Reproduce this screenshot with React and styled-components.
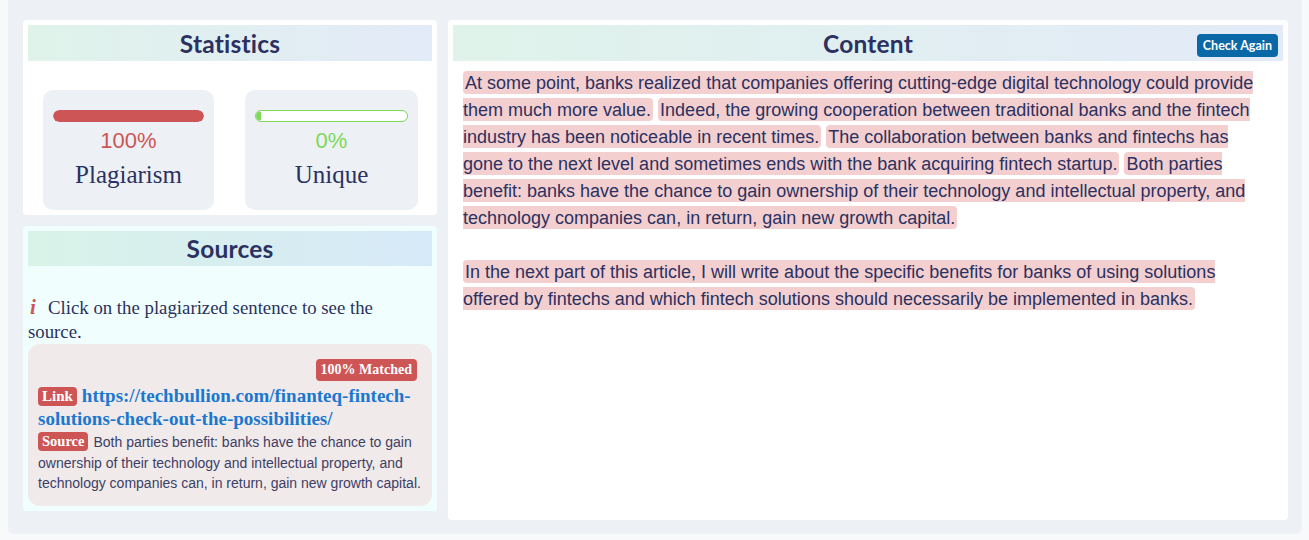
import React from 'react';
import styled, { createGlobalStyle } from 'styled-components';

const GlobalStyle = createGlobalStyle`
    html, body {
        margin: 0;
        padding: 0;
        background: #f8f9fa;
    }
    body {
        padding: 0 7px 6px 8px;
        font-family: "Liberation Sans", Arial, sans-serif;
    }
`;

const Page = styled.div`
    height: 534px;
    box-sizing: border-box;
    background: #edf1f5;
    border-radius: 0 0 6px 6px;
    padding: 20px 14px 14px 15px;
    display: grid;
    grid-template-columns: 414px 1fr;
    align-items: start;
    gap: 11px;
`;

const LeftColumn = styled.div`
    display: flex;
    flex-direction: column;
    gap: 11px;
`;

const Card = styled.div`
    background: ${(p) => p.$bg || '#ffffff'};
    border-radius: 4px;
    padding: 5px;
    display: flex;
    flex-direction: column;
    height: ${(p) => (p.$fill ? '100%' : 'auto')};
    box-sizing: border-box;
`;

const Header = styled.div`
    height: ${(p) => p.$h || 36}px;
    background: linear-gradient(90deg, ${(p) => p.$from} 0%, ${(p) => p.$to} 100%);
    display: grid;
    grid-template-columns: 1fr auto 1fr;
    align-items: center;
`;

const HeaderTitle = styled.h2`
    grid-column: 2;
    margin: 0;
    font-family: Lato, "Open Sans", sans-serif;
    font-weight: 700;
    font-size: 24.5px;
    color: #2b3160;
    letter-spacing: 0.2px;
`;

const CheckButton = styled.button`
    grid-column: 3;
    justify-self: end;
    margin: 5px 5px 0 0;
    height: 23px;
    padding: 0 6px;
    border: none;
    border-radius: 4px;
    background: #0a68a6;
    color: #ffffff;
    font-family: Lato, "Open Sans", sans-serif;
    font-weight: 700;
    font-size: 12.5px;
    cursor: pointer;
`;

const StatsRow = styled.div`
    display: grid;
    grid-template-columns: 171px 173px;
    gap: 31px;
    padding: 29px 0 0 15px;
`;

const StatBox = styled.div`
    height: 120px;
    box-sizing: border-box;
    background: #edf1f5;
    border-radius: 10px;
    padding: 20px 10px 0;
    display: flex;
    flex-direction: column;
    align-items: center;
`;

const Bar = styled.div`
    width: 100%;
    height: 12px;
    box-sizing: border-box;
    border-radius: 6px;
    background: #ffffff;
    border: ${(p) => (p.$outline ? `1px solid ${p.$color}` : 'none')};
    overflow: hidden;
    display: flex;
`;

const BarFill = styled.div`
    height: 100%;
    background: ${(p) => p.$color};
    border-radius: 6px;
`;

const Percent = styled.div`
    margin-top: 6px;
    font-family: "Liberation Sans", Arial, sans-serif;
    font-size: 22px;
    line-height: 26px;
    color: ${(p) => p.$color};
`;

const StatLabel = styled.div`
    margin-top: 7px;
    font-family: "Liberation Serif", "Times New Roman", serif;
    font-size: 25px;
    line-height: 28px;
    color: #2b3160;
`;

const InfoText = styled.p`
    margin: 29px 0 0;
    max-width: 385px;
    font-family: "Liberation Serif", "Times New Roman", serif;
    font-size: 18.8px;
    line-height: 24px;
    color: #2b3160;
`;

const InfoIcon = styled.span`
    display: inline-block;
    width: 16px;
    padding-left: 2px;
    margin-right: 2px;
    font-family: "Liberation Serif", serif;
    font-style: italic;
    font-weight: 700;
    font-size: 21px;
    color: #cd5555;
`;

const SourceBox = styled.div`
    background: #f1eaea;
    border-radius: 12px;
    padding: 15px 10px 12px;
`;

const MatchRow = styled.div`
    display: flex;
    justify-content: flex-end;
`;

const Badge = styled.span`
    display: inline-block;
    background: #cd5555;
    color: #ffffff;
    border-radius: 4px;
    font-family: "Liberation Serif", "Times New Roman", serif;
    font-weight: 700;
    font-size: ${(p) => p.$size || 14}px;
    line-height: ${(p) => p.$lh || 19}px;
    padding: 0 ${(p) => p.$pad || 4}px;
    margin-right: 5px;
    vertical-align: 1px;
`;

const LinkLine = styled.p`
    margin: 3px 0 0;
    font-family: "Liberation Serif", "Times New Roman", serif;
    font-weight: 700;
    font-size: 19px;
    line-height: 23px;
`;

const SourceUrl = styled.a`
    color: #1a78cf;
    text-decoration: none;
`;

const SourceLine = styled.p`
    margin: 2px 0 0;
    font-family: "Liberation Sans", Arial, sans-serif;
    font-size: 14px;
    line-height: 20.5px;
    color: #3c4066;
`;

const ContentText = styled.div`
    padding: 8px 20px 0 10px;
    font-family: "Liberation Sans", Arial, sans-serif;
    font-size: 18px;
    line-height: 27px;
    color: #2b3160;
`;

const Sentence = styled.span`
    background: #f3cfd0;
    border-radius: 4px;
    padding: 1.5px 2px;
    cursor: pointer;
`;

const paragraphs = [
    [
        'At some point, banks realized that companies offering cutting-edge digital technology could provide them much more value.',
        'Indeed, the growing cooperation between traditional banks and the fintech industry has been noticeable in recent times.',
        'The collaboration between banks and fintechs has gone to the next level and sometimes ends with the bank acquiring fintech startup.',
        'Both parties benefit: banks have the chance to gain ownership of their technology and intellectual property, and technology companies can, in return, gain new growth capital.',
    ],
    [
        'In the next part of this article, I will write about the specific benefits for banks of using solutions offered by fintechs and which fintech solutions should necessarily be implemented in banks.',
    ],
];

function StatCard({ value, label, color, outline }) {
    return (
        <StatBox>
            <Bar $outline={outline} $color={color}>
                <BarFill $color={color} style={{ width: value === 0 ? '5px' : `${value}%` }} />
            </Bar>
            <Percent $color={color}>{value}%</Percent>
            <StatLabel>{label}</StatLabel>
        </StatBox>
    );
}

function App() {
    return (
        <>
            <GlobalStyle />
            <Page>
                <LeftColumn>
                    <Card>
                        <Header $from="#dff3ea" $to="#e3eaf8">
                            <HeaderTitle>Statistics</HeaderTitle>
                        </Header>
                        <StatsRow>
                            <StatCard value={100} label="Plagiarism" color="#cd5555" />
                            <StatCard value={0} label="Unique" color="#7dd958" outline />
                        </StatsRow>
                    </Card>

                    <Card $bg="#f0fffe">
                        <Header $h={35} $from="#d9f3e8" $to="#d6e9f8">
                            <HeaderTitle>Sources</HeaderTitle>
                        </Header>
                        <InfoText>
                            <InfoIcon>i</InfoIcon>
                            Click on the plagiarized sentence to see the source.
                        </InfoText>
                        <SourceBox>
                            <MatchRow>
                                <Badge $size={14} $lh={22} $pad={5}>100% Matched</Badge>
                            </MatchRow>
                            <LinkLine>
                                <Badge $size={15} $pad={4}>Link</Badge>
                                <SourceUrl href="#">
                                    https://techbullion.com/finanteq-fintech-solutions-check-out-the-possibilities/
                                </SourceUrl>
                            </LinkLine>
                            <SourceLine>
                                <Badge $size={14.5} $pad={4}>Source</Badge>
                                Both parties benefit: banks have the chance to gain ownership of their technology and
                                intellectual property, and technology companies can, in return, gain new growth capital.
                            </SourceLine>
                        </SourceBox>
                    </Card>
                </LeftColumn>

                <Card $fill>
                    <Header $from="#dff3ea" $to="#e3eaf8">
                        <HeaderTitle>Content</HeaderTitle>
                        <CheckButton>Check Again</CheckButton>
                    </Header>
                    <ContentText>
                        {paragraphs.map((sentences, i) => (
                            <React.Fragment key={i}>
                                {i > 0 && (
                                    <>
                                        <br />
                                        <br />
                                    </>
                                )}
                                {sentences.map((s, j) => (
                                    <React.Fragment key={j}>
                                        <Sentence>{s}</Sentence>{' '}
                                    </React.Fragment>
                                ))}
                            </React.Fragment>
                        ))}
                    </ContentText>
                </Card>
            </Page>
        </>
    );
}

export default App;
